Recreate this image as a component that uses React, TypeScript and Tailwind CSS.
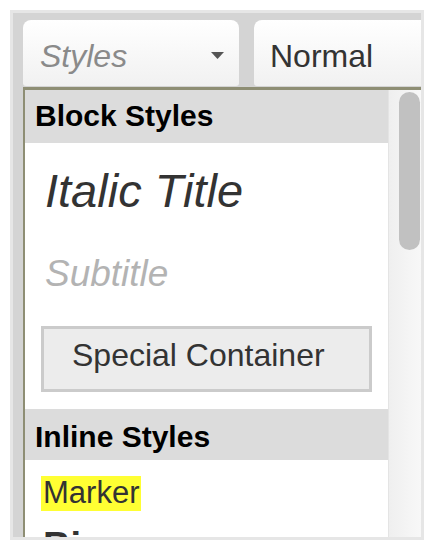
import type { ReactNode } from 'react';

const font = "font-['Liberation_Sans',Arial,sans-serif]";

function ComboButton({ children, className = '' }: { children: ReactNode; className?: string }) {
  return (
    <div
      className={`flex h-[66px] shrink-0 items-start rounded-t-[8px] rounded-b-[3px] bg-gradient-to-b from-white to-[#f1f1f1] pt-[6px] ${className}`}
    >
      {children}
    </div>
  );
}

export default function App() {
  return (
    <div className={`h-[556px] w-[438px] bg-white pl-[10px] pt-[10px] ${font}`}>
      <div className="flex h-[530px] w-[414px] flex-col overflow-hidden border-[3px] border-[#e6e6e6] bg-[#d4d4d4] pl-[10px] pt-[7px]">
        {/* toolbar combos */}
        <div className="flex gap-[15px]">
          <ComboButton className="w-[216px] justify-between pl-[17px] pr-[15px]">
            <span className="text-[32px] italic leading-[60px] text-[#8a8a8a]">Styles</span>
            <svg width="13" height="7" viewBox="0 0 13 7" className="mt-[26px]">
              <polygon points="0,0 13,0 6.5,7" fill="#555" />
            </svg>
          </ComboButton>
          <ComboButton className="w-[200px] pl-[16px]">
            <span className="text-[32px] leading-[60px] text-[#333]">Normal</span>
          </ComboButton>
        </div>

        {/* styles dropdown panel */}
        <div className="mt-[1px] flex min-h-0 flex-1 border-l-[2px] border-t-[3px] border-[#8e8e74] bg-white">
          <div className="w-[363px] shrink-0">
            <div className="h-[53px] bg-[#dcdcdc] pl-[10px] pt-[11px] text-[30px] font-bold leading-[30px] text-black">
              Block Styles
            </div>
            <div className="mt-[24px] pl-[20px] text-[47px] italic leading-[47px] text-[#333]">Italic Title</div>
            <div className="mt-[42px] pl-[20px] text-[37px] italic leading-[36px] text-[#b3b3b3]">Subtitle</div>
            <div className="ml-[16px] mt-[34px] h-[66px] w-[331px] border-[3px] border-[#cbcbcb] bg-[#ececec] pl-[28px] pt-[11px] text-[32px] leading-[31px] text-[#333]">
              Special Container
            </div>
            <div className="mt-[17px] h-[51px] bg-[#dcdcdc] pl-[10px] pt-[13px] text-[30px] font-bold leading-[29px] text-black">
              Inline Styles
            </div>
            <div className="mt-[16px] pl-[16px]">
              <span className="inline-block h-[35px] bg-[#ffff33] px-[2px] text-[31px] leading-[34px] text-[#333]">
                Marker
              </span>
            </div>
            <div className="mt-[16px] pl-[18px] text-[38px] font-bold leading-[38px] text-[#333]">Big</div>
          </div>

          {/* scrollbar */}
          <div className="flex-1 border-l border-[#e4e4e4] bg-gradient-to-r from-[#efefef] to-[#f8f8f8] pl-[10px] pt-[2px]">
            <div className="h-[158px] w-[21px] rounded-full bg-[#c1c1c1]" />
          </div>
        </div>
      </div>
    </div>
  );
}
